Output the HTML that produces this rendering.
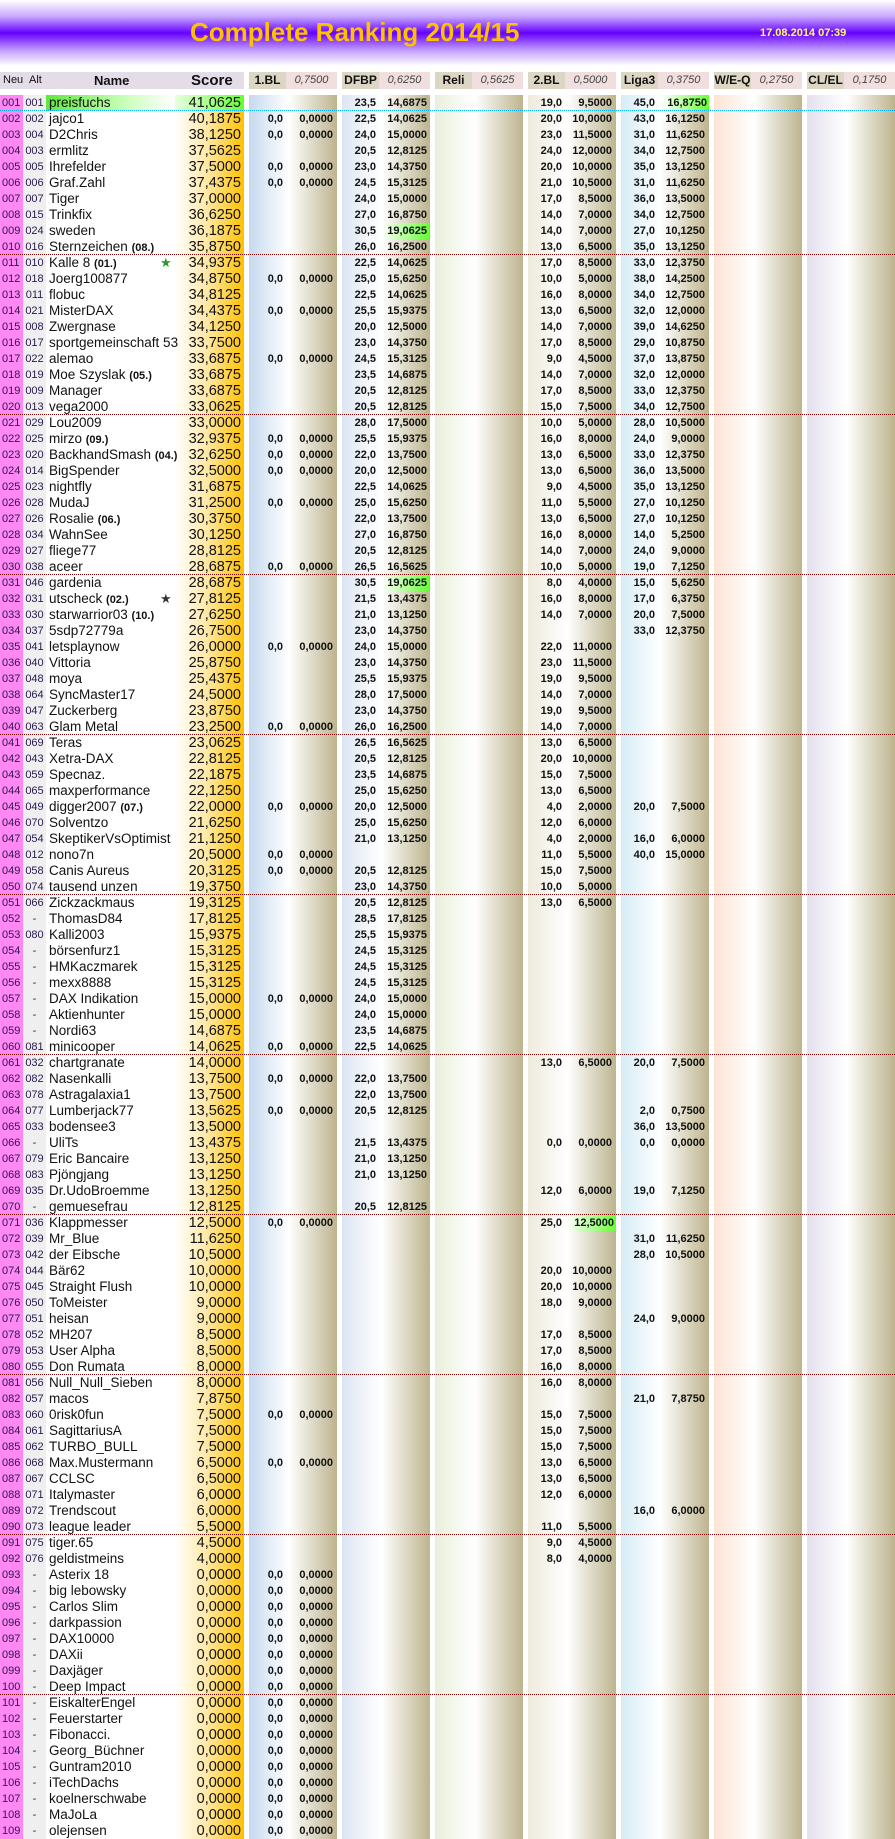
<!DOCTYPE html>
<html><head><meta charset="utf-8"><style>
*{margin:0;padding:0;box-sizing:border-box}
body{width:895px;height:1839px;background:#fff;position:relative;overflow:hidden;font-family:"Liberation Sans",Arial,sans-serif;color:#111}
#hd{position:absolute;left:0;top:0;width:895px;height:66px;background:linear-gradient(#fff 0%,#c8a8ff 25%,#6600ff 50%,#c8a8ff 78%,#fff 100%)}
#tt{position:absolute;left:190px;top:17px;font-size:26px;font-weight:bold;color:#ffc000;white-space:nowrap}
#dt{position:absolute;left:760px;top:27px;font-size:11px;font-weight:bold;color:#ffff66;white-space:nowrap}
.h{position:absolute;top:72px;height:17px;line-height:17px;font-size:11px;white-space:nowrap}
.bg{position:absolute;top:95px;height:1744px}
.bk{width:88px}
#rows{position:absolute;left:0;top:95px;width:895px}
.r{position:relative;height:16px;width:895px}
.r>i{position:absolute;top:0;height:16px;line-height:16px;font-style:normal;white-space:nowrap;text-align:right;font-size:11px;font-weight:bold;color:#111}
.r>i:nth-child(1){left:0;width:23px;text-align:left;padding-left:2px;font-weight:normal;color:#2a1850}
.r>i:nth-child(2){left:23px;width:23px;text-align:center;font-weight:normal;color:#2a1850}
.r>i:nth-child(3){left:49px;text-align:left;font-size:13.5px;font-weight:normal}
.r>i:nth-child(4){left:175px;width:66px;font-size:14.5px;font-weight:normal}
.r>i:nth-child(5){left:249px;width:34px}
.r>i:nth-child(6){left:285px;width:48px}
.r>i:nth-child(7){left:342px;width:34px}
.r>i:nth-child(8){left:378px;width:49px}
.r>i:nth-child(9){left:528px;width:34px}
.r>i:nth-child(10){left:564px;width:48px}
.r>i:nth-child(11){left:621px;width:34px}
.r>i:nth-child(12){left:657px;width:48px}
.r>i.g{background:linear-gradient(90deg,#fff,#66ff33);padding-right:2px}
.r>i:nth-child(8).g{left:382px;width:47px}
.r>i:nth-child(10).g{left:567px;width:49px}
.r>i:nth-child(12).g{left:662px;width:47px}
.r>i b{font-size:11px}
.s::after{content:"";position:absolute;left:0;right:0;bottom:0;border-bottom:1px dotted #7a0000}
.c::after{content:"";position:absolute;left:0;right:0;bottom:0;border-bottom:1px dotted #00b0f0}
.st{position:absolute;left:111px;top:0;font-size:13px;color:#2a9a2a}
.st2{position:absolute;left:111px;top:0;font-size:13px;color:#333}
</style></head><body>
<div id="hd"></div>
<div id="tt">Complete Ranking 2014/15</div>
<div id="dt">17.08.2014 07:39</div>

<div class="h" style="left:0;width:244px;background:#e4dde8"></div>
<div class="h" style="left:3px">Neu</div>
<div class="h" style="left:29px">Alt</div>
<div class="h" style="left:94px;font-size:13px;font-weight:bold">Name</div>
<div class="h" style="left:191px;font-size:15px;font-weight:bold">Score</div>

<div class="h" style="left:249px;width:37px;background:#dcd6c4;text-align:center;font-weight:bold;font-size:12px">1.BL</div><div class="h" style="left:286px;width:51px;background:#f1dede;text-align:center;font-style:italic;color:#444">0,7500</div>
<div class="h" style="left:342px;width:37px;background:#dcd6c4;text-align:center;font-weight:bold;font-size:12px">DFBP</div><div class="h" style="left:379px;width:51px;background:#f1dede;text-align:center;font-style:italic;color:#444">0,6250</div>
<div class="h" style="left:435px;width:37px;background:#dcd6c4;text-align:center;font-weight:bold;font-size:12px">Reli</div><div class="h" style="left:472px;width:51px;background:#f1dede;text-align:center;font-style:italic;color:#444">0,5625</div>
<div class="h" style="left:528px;width:37px;background:#dcd6c4;text-align:center;font-weight:bold;font-size:12px">2.BL</div><div class="h" style="left:565px;width:51px;background:#f1dede;text-align:center;font-style:italic;color:#444">0,5000</div>
<div class="h" style="left:621px;width:37px;background:#dcd6c4;text-align:center;font-weight:bold;font-size:12px">Liga3</div><div class="h" style="left:658px;width:51px;background:#f1dede;text-align:center;font-style:italic;color:#444">0,3750</div>
<div class="h" style="left:714px;width:37px;background:#dcd6c4;text-align:center;font-weight:bold;font-size:12px">W/E-Q</div><div class="h" style="left:751px;width:51px;background:#f1dede;text-align:center;font-style:italic;color:#444">0,2750</div>
<div class="h" style="left:807px;width:37px;background:#dcd6c4;text-align:center;font-weight:bold;font-size:12px">CL/EL</div><div class="h" style="left:844px;width:51px;background:#f1dede;text-align:center;font-style:italic;color:#444">0,1750</div>

<div class="bg" style="left:0;width:23px;background:#ff88f4"></div>
<div class="bg" style="left:23px;width:23px;background:#efefef"></div>
<div class="bg" style="left:46px;top:95px;height:16px;width:129px;background:linear-gradient(90deg,#5fe83a,#c8ffb8 60%,#fff)"></div>
<div class="bg" style="left:175px;width:69px;background:linear-gradient(90deg,#fff 0%,#ffe9a8 45%,#ffc000 100%)"></div>
<div class="bg" style="left:175px;height:16px;width:69px;background:linear-gradient(90deg,#e8ffe0,#66ff33)"></div>
<div class="bg bk" style="left:249px;background:linear-gradient(90deg,#c6d9f0,#fff 45%,#bdb48e)"></div>
<div class="bg bk" style="left:342px;background:linear-gradient(90deg,#dde5f2,#fff 45%,#bdb48e)"></div>
<div class="bg bk" style="left:435px;background:linear-gradient(90deg,#e8f0dc,#fff 45%,#bdb48e)"></div>
<div class="bg bk" style="left:528px;background:linear-gradient(90deg,#eeeadc,#fff 45%,#bdb48e)"></div>
<div class="bg bk" style="left:621px;background:linear-gradient(90deg,#d6ecf6,#fff 45%,#bdb48e)"></div>
<div class="bg bk" style="left:714px;background:linear-gradient(90deg,#fde3d4,#fff 45%,#bdb48e)"></div>
<div class="bg bk" style="left:807px;background:linear-gradient(90deg,#e4e0ee,#fff 45%,#bdb48e)"></div>

<div id="rows">
<div class="r c"><i>001</i><i>001</i><i>preisfuchs</i><i>41,0625</i><i></i><i></i><i>23,5</i><i>14,6875</i><i>19,0</i><i>9,5000</i><i>45,0</i><i class="g">16,8750</i></div>
<div class="r"><i>002</i><i>002</i><i>jajco1</i><i>40,1875</i><i>0,0</i><i>0,0000</i><i>22,5</i><i>14,0625</i><i>20,0</i><i>10,0000</i><i>43,0</i><i>16,1250</i></div>
<div class="r"><i>003</i><i>004</i><i>D2Chris</i><i>38,1250</i><i>0,0</i><i>0,0000</i><i>24,0</i><i>15,0000</i><i>23,0</i><i>11,5000</i><i>31,0</i><i>11,6250</i></div>
<div class="r"><i>004</i><i>003</i><i>ermlitz</i><i>37,5625</i><i></i><i></i><i>20,5</i><i>12,8125</i><i>24,0</i><i>12,0000</i><i>34,0</i><i>12,7500</i></div>
<div class="r"><i>005</i><i>005</i><i>Ihrefelder</i><i>37,5000</i><i>0,0</i><i>0,0000</i><i>23,0</i><i>14,3750</i><i>20,0</i><i>10,0000</i><i>35,0</i><i>13,1250</i></div>
<div class="r"><i>006</i><i>006</i><i>Graf.Zahl</i><i>37,4375</i><i>0,0</i><i>0,0000</i><i>24,5</i><i>15,3125</i><i>21,0</i><i>10,5000</i><i>31,0</i><i>11,6250</i></div>
<div class="r"><i>007</i><i>007</i><i>Tiger</i><i>37,0000</i><i></i><i></i><i>24,0</i><i>15,0000</i><i>17,0</i><i>8,5000</i><i>36,0</i><i>13,5000</i></div>
<div class="r"><i>008</i><i>015</i><i>Trinkfix</i><i>36,6250</i><i></i><i></i><i>27,0</i><i>16,8750</i><i>14,0</i><i>7,0000</i><i>34,0</i><i>12,7500</i></div>
<div class="r"><i>009</i><i>024</i><i>sweden</i><i>36,1875</i><i></i><i></i><i>30,5</i><i class="g">19,0625</i><i>14,0</i><i>7,0000</i><i>27,0</i><i>10,1250</i></div>
<div class="r s"><i>010</i><i>016</i><i>Sternzeichen <b>(08.)</b></i><i>35,8750</i><i></i><i></i><i>26,0</i><i>16,2500</i><i>13,0</i><i>6,5000</i><i>35,0</i><i>13,1250</i></div>
<div class="r"><i>011</i><i>010</i><i>Kalle 8 <b>(01.)</b><span class="st">★</span></i><i>34,9375</i><i></i><i></i><i>22,5</i><i>14,0625</i><i>17,0</i><i>8,5000</i><i>33,0</i><i>12,3750</i></div>
<div class="r"><i>012</i><i>018</i><i>Joerg100877</i><i>34,8750</i><i>0,0</i><i>0,0000</i><i>25,0</i><i>15,6250</i><i>10,0</i><i>5,0000</i><i>38,0</i><i>14,2500</i></div>
<div class="r"><i>013</i><i>011</i><i>flobuc</i><i>34,8125</i><i></i><i></i><i>22,5</i><i>14,0625</i><i>16,0</i><i>8,0000</i><i>34,0</i><i>12,7500</i></div>
<div class="r"><i>014</i><i>021</i><i>MisterDAX</i><i>34,4375</i><i>0,0</i><i>0,0000</i><i>25,5</i><i>15,9375</i><i>13,0</i><i>6,5000</i><i>32,0</i><i>12,0000</i></div>
<div class="r"><i>015</i><i>008</i><i>Zwergnase</i><i>34,1250</i><i></i><i></i><i>20,0</i><i>12,5000</i><i>14,0</i><i>7,0000</i><i>39,0</i><i>14,6250</i></div>
<div class="r"><i>016</i><i>017</i><i>sportgemeinschaft 53</i><i>33,7500</i><i></i><i></i><i>23,0</i><i>14,3750</i><i>17,0</i><i>8,5000</i><i>29,0</i><i>10,8750</i></div>
<div class="r"><i>017</i><i>022</i><i>alemao</i><i>33,6875</i><i>0,0</i><i>0,0000</i><i>24,5</i><i>15,3125</i><i>9,0</i><i>4,5000</i><i>37,0</i><i>13,8750</i></div>
<div class="r"><i>018</i><i>019</i><i>Moe Szyslak <b>(05.)</b></i><i>33,6875</i><i></i><i></i><i>23,5</i><i>14,6875</i><i>14,0</i><i>7,0000</i><i>32,0</i><i>12,0000</i></div>
<div class="r"><i>019</i><i>009</i><i>Manager</i><i>33,6875</i><i></i><i></i><i>20,5</i><i>12,8125</i><i>17,0</i><i>8,5000</i><i>33,0</i><i>12,3750</i></div>
<div class="r s"><i>020</i><i>013</i><i>vega2000</i><i>33,0625</i><i></i><i></i><i>20,5</i><i>12,8125</i><i>15,0</i><i>7,5000</i><i>34,0</i><i>12,7500</i></div>
<div class="r"><i>021</i><i>029</i><i>Lou2009</i><i>33,0000</i><i></i><i></i><i>28,0</i><i>17,5000</i><i>10,0</i><i>5,0000</i><i>28,0</i><i>10,5000</i></div>
<div class="r"><i>022</i><i>025</i><i>mirzo <b>(09.)</b></i><i>32,9375</i><i>0,0</i><i>0,0000</i><i>25,5</i><i>15,9375</i><i>16,0</i><i>8,0000</i><i>24,0</i><i>9,0000</i></div>
<div class="r"><i>023</i><i>020</i><i>BackhandSmash <b>(04.)</b></i><i>32,6250</i><i>0,0</i><i>0,0000</i><i>22,0</i><i>13,7500</i><i>13,0</i><i>6,5000</i><i>33,0</i><i>12,3750</i></div>
<div class="r"><i>024</i><i>014</i><i>BigSpender</i><i>32,5000</i><i>0,0</i><i>0,0000</i><i>20,0</i><i>12,5000</i><i>13,0</i><i>6,5000</i><i>36,0</i><i>13,5000</i></div>
<div class="r"><i>025</i><i>023</i><i>nightfly</i><i>31,6875</i><i></i><i></i><i>22,5</i><i>14,0625</i><i>9,0</i><i>4,5000</i><i>35,0</i><i>13,1250</i></div>
<div class="r"><i>026</i><i>028</i><i>MudaJ</i><i>31,2500</i><i>0,0</i><i>0,0000</i><i>25,0</i><i>15,6250</i><i>11,0</i><i>5,5000</i><i>27,0</i><i>10,1250</i></div>
<div class="r"><i>027</i><i>026</i><i>Rosalie <b>(06.)</b></i><i>30,3750</i><i></i><i></i><i>22,0</i><i>13,7500</i><i>13,0</i><i>6,5000</i><i>27,0</i><i>10,1250</i></div>
<div class="r"><i>028</i><i>034</i><i>WahnSee</i><i>30,1250</i><i></i><i></i><i>27,0</i><i>16,8750</i><i>16,0</i><i>8,0000</i><i>14,0</i><i>5,2500</i></div>
<div class="r"><i>029</i><i>027</i><i>fliege77</i><i>28,8125</i><i></i><i></i><i>20,5</i><i>12,8125</i><i>14,0</i><i>7,0000</i><i>24,0</i><i>9,0000</i></div>
<div class="r s"><i>030</i><i>038</i><i>aceer</i><i>28,6875</i><i>0,0</i><i>0,0000</i><i>26,5</i><i>16,5625</i><i>10,0</i><i>5,0000</i><i>19,0</i><i>7,1250</i></div>
<div class="r"><i>031</i><i>046</i><i>gardenia</i><i>28,6875</i><i></i><i></i><i>30,5</i><i class="g">19,0625</i><i>8,0</i><i>4,0000</i><i>15,0</i><i>5,6250</i></div>
<div class="r"><i>032</i><i>031</i><i>utscheck <b>(02.)</b><span class="st2">★</span></i><i>27,8125</i><i></i><i></i><i>21,5</i><i>13,4375</i><i>16,0</i><i>8,0000</i><i>17,0</i><i>6,3750</i></div>
<div class="r"><i>033</i><i>030</i><i>starwarrior03 <b>(10.)</b></i><i>27,6250</i><i></i><i></i><i>21,0</i><i>13,1250</i><i>14,0</i><i>7,0000</i><i>20,0</i><i>7,5000</i></div>
<div class="r"><i>034</i><i>037</i><i>5sdp72779a</i><i>26,7500</i><i></i><i></i><i>23,0</i><i>14,3750</i><i></i><i></i><i>33,0</i><i>12,3750</i></div>
<div class="r"><i>035</i><i>041</i><i>letsplaynow</i><i>26,0000</i><i>0,0</i><i>0,0000</i><i>24,0</i><i>15,0000</i><i>22,0</i><i>11,0000</i><i></i><i></i></div>
<div class="r"><i>036</i><i>040</i><i>Vittoria</i><i>25,8750</i><i></i><i></i><i>23,0</i><i>14,3750</i><i>23,0</i><i>11,5000</i><i></i><i></i></div>
<div class="r"><i>037</i><i>048</i><i>moya</i><i>25,4375</i><i></i><i></i><i>25,5</i><i>15,9375</i><i>19,0</i><i>9,5000</i><i></i><i></i></div>
<div class="r"><i>038</i><i>064</i><i>SyncMaster17</i><i>24,5000</i><i></i><i></i><i>28,0</i><i>17,5000</i><i>14,0</i><i>7,0000</i><i></i><i></i></div>
<div class="r"><i>039</i><i>047</i><i>Zuckerberg</i><i>23,8750</i><i></i><i></i><i>23,0</i><i>14,3750</i><i>19,0</i><i>9,5000</i><i></i><i></i></div>
<div class="r s"><i>040</i><i>063</i><i>Glam Metal</i><i>23,2500</i><i>0,0</i><i>0,0000</i><i>26,0</i><i>16,2500</i><i>14,0</i><i>7,0000</i><i></i><i></i></div>
<div class="r"><i>041</i><i>069</i><i>Teras</i><i>23,0625</i><i></i><i></i><i>26,5</i><i>16,5625</i><i>13,0</i><i>6,5000</i><i></i><i></i></div>
<div class="r"><i>042</i><i>043</i><i>Xetra-DAX</i><i>22,8125</i><i></i><i></i><i>20,5</i><i>12,8125</i><i>20,0</i><i>10,0000</i><i></i><i></i></div>
<div class="r"><i>043</i><i>059</i><i>Specnaz.</i><i>22,1875</i><i></i><i></i><i>23,5</i><i>14,6875</i><i>15,0</i><i>7,5000</i><i></i><i></i></div>
<div class="r"><i>044</i><i>065</i><i>maxperformance</i><i>22,1250</i><i></i><i></i><i>25,0</i><i>15,6250</i><i>13,0</i><i>6,5000</i><i></i><i></i></div>
<div class="r"><i>045</i><i>049</i><i>digger2007 <b>(07.)</b></i><i>22,0000</i><i>0,0</i><i>0,0000</i><i>20,0</i><i>12,5000</i><i>4,0</i><i>2,0000</i><i>20,0</i><i>7,5000</i></div>
<div class="r"><i>046</i><i>070</i><i>Solventzo</i><i>21,6250</i><i></i><i></i><i>25,0</i><i>15,6250</i><i>12,0</i><i>6,0000</i><i></i><i></i></div>
<div class="r"><i>047</i><i>054</i><i>SkeptikerVsOptimist</i><i>21,1250</i><i></i><i></i><i>21,0</i><i>13,1250</i><i>4,0</i><i>2,0000</i><i>16,0</i><i>6,0000</i></div>
<div class="r"><i>048</i><i>012</i><i>nono7n</i><i>20,5000</i><i>0,0</i><i>0,0000</i><i></i><i></i><i>11,0</i><i>5,5000</i><i>40,0</i><i>15,0000</i></div>
<div class="r"><i>049</i><i>058</i><i>Canis Aureus</i><i>20,3125</i><i>0,0</i><i>0,0000</i><i>20,5</i><i>12,8125</i><i>15,0</i><i>7,5000</i><i></i><i></i></div>
<div class="r s"><i>050</i><i>074</i><i>tausend unzen</i><i>19,3750</i><i></i><i></i><i>23,0</i><i>14,3750</i><i>10,0</i><i>5,0000</i><i></i><i></i></div>
<div class="r"><i>051</i><i>066</i><i>Zickzackmaus</i><i>19,3125</i><i></i><i></i><i>20,5</i><i>12,8125</i><i>13,0</i><i>6,5000</i><i></i><i></i></div>
<div class="r"><i>052</i><i>-</i><i>ThomasD84</i><i>17,8125</i><i></i><i></i><i>28,5</i><i>17,8125</i><i></i><i></i><i></i><i></i></div>
<div class="r"><i>053</i><i>080</i><i>Kalli2003</i><i>15,9375</i><i></i><i></i><i>25,5</i><i>15,9375</i><i></i><i></i><i></i><i></i></div>
<div class="r"><i>054</i><i>-</i><i>börsenfurz1</i><i>15,3125</i><i></i><i></i><i>24,5</i><i>15,3125</i><i></i><i></i><i></i><i></i></div>
<div class="r"><i>055</i><i>-</i><i>HMKaczmarek</i><i>15,3125</i><i></i><i></i><i>24,5</i><i>15,3125</i><i></i><i></i><i></i><i></i></div>
<div class="r"><i>056</i><i>-</i><i>mexx8888</i><i>15,3125</i><i></i><i></i><i>24,5</i><i>15,3125</i><i></i><i></i><i></i><i></i></div>
<div class="r"><i>057</i><i>-</i><i>DAX Indikation</i><i>15,0000</i><i>0,0</i><i>0,0000</i><i>24,0</i><i>15,0000</i><i></i><i></i><i></i><i></i></div>
<div class="r"><i>058</i><i>-</i><i>Aktienhunter</i><i>15,0000</i><i></i><i></i><i>24,0</i><i>15,0000</i><i></i><i></i><i></i><i></i></div>
<div class="r"><i>059</i><i>-</i><i>Nordi63</i><i>14,6875</i><i></i><i></i><i>23,5</i><i>14,6875</i><i></i><i></i><i></i><i></i></div>
<div class="r s"><i>060</i><i>081</i><i>minicooper</i><i>14,0625</i><i>0,0</i><i>0,0000</i><i>22,5</i><i>14,0625</i><i></i><i></i><i></i><i></i></div>
<div class="r"><i>061</i><i>032</i><i>chartgranate</i><i>14,0000</i><i></i><i></i><i></i><i></i><i>13,0</i><i>6,5000</i><i>20,0</i><i>7,5000</i></div>
<div class="r"><i>062</i><i>082</i><i>Nasenkalli</i><i>13,7500</i><i>0,0</i><i>0,0000</i><i>22,0</i><i>13,7500</i><i></i><i></i><i></i><i></i></div>
<div class="r"><i>063</i><i>078</i><i>Astragalaxia1</i><i>13,7500</i><i></i><i></i><i>22,0</i><i>13,7500</i><i></i><i></i><i></i><i></i></div>
<div class="r"><i>064</i><i>077</i><i>Lumberjack77</i><i>13,5625</i><i>0,0</i><i>0,0000</i><i>20,5</i><i>12,8125</i><i></i><i></i><i>2,0</i><i>0,7500</i></div>
<div class="r"><i>065</i><i>033</i><i>bodensee3</i><i>13,5000</i><i></i><i></i><i></i><i></i><i></i><i></i><i>36,0</i><i>13,5000</i></div>
<div class="r"><i>066</i><i>-</i><i>UliTs</i><i>13,4375</i><i></i><i></i><i>21,5</i><i>13,4375</i><i>0,0</i><i>0,0000</i><i>0,0</i><i>0,0000</i></div>
<div class="r"><i>067</i><i>079</i><i>Eric Bancaire</i><i>13,1250</i><i></i><i></i><i>21,0</i><i>13,1250</i><i></i><i></i><i></i><i></i></div>
<div class="r"><i>068</i><i>083</i><i>Pjöngjang</i><i>13,1250</i><i></i><i></i><i>21,0</i><i>13,1250</i><i></i><i></i><i></i><i></i></div>
<div class="r"><i>069</i><i>035</i><i>Dr.UdoBroemme</i><i>13,1250</i><i></i><i></i><i></i><i></i><i>12,0</i><i>6,0000</i><i>19,0</i><i>7,1250</i></div>
<div class="r s"><i>070</i><i>-</i><i>gemuesefrau</i><i>12,8125</i><i></i><i></i><i>20,5</i><i>12,8125</i><i></i><i></i><i></i><i></i></div>
<div class="r"><i>071</i><i>036</i><i>Klappmesser</i><i>12,5000</i><i>0,0</i><i>0,0000</i><i></i><i></i><i>25,0</i><i class="g">12,5000</i><i></i><i></i></div>
<div class="r"><i>072</i><i>039</i><i>Mr_Blue</i><i>11,6250</i><i></i><i></i><i></i><i></i><i></i><i></i><i>31,0</i><i>11,6250</i></div>
<div class="r"><i>073</i><i>042</i><i>der Eibsche</i><i>10,5000</i><i></i><i></i><i></i><i></i><i></i><i></i><i>28,0</i><i>10,5000</i></div>
<div class="r"><i>074</i><i>044</i><i>Bär62</i><i>10,0000</i><i></i><i></i><i></i><i></i><i>20,0</i><i>10,0000</i><i></i><i></i></div>
<div class="r"><i>075</i><i>045</i><i>Straight Flush</i><i>10,0000</i><i></i><i></i><i></i><i></i><i>20,0</i><i>10,0000</i><i></i><i></i></div>
<div class="r"><i>076</i><i>050</i><i>ToMeister</i><i>9,0000</i><i></i><i></i><i></i><i></i><i>18,0</i><i>9,0000</i><i></i><i></i></div>
<div class="r"><i>077</i><i>051</i><i>heisan</i><i>9,0000</i><i></i><i></i><i></i><i></i><i></i><i></i><i>24,0</i><i>9,0000</i></div>
<div class="r"><i>078</i><i>052</i><i>MH207</i><i>8,5000</i><i></i><i></i><i></i><i></i><i>17,0</i><i>8,5000</i><i></i><i></i></div>
<div class="r"><i>079</i><i>053</i><i>User Alpha</i><i>8,5000</i><i></i><i></i><i></i><i></i><i>17,0</i><i>8,5000</i><i></i><i></i></div>
<div class="r s"><i>080</i><i>055</i><i>Don Rumata</i><i>8,0000</i><i></i><i></i><i></i><i></i><i>16,0</i><i>8,0000</i><i></i><i></i></div>
<div class="r"><i>081</i><i>056</i><i>Null_Null_Sieben</i><i>8,0000</i><i></i><i></i><i></i><i></i><i>16,0</i><i>8,0000</i><i></i><i></i></div>
<div class="r"><i>082</i><i>057</i><i>macos</i><i>7,8750</i><i></i><i></i><i></i><i></i><i></i><i></i><i>21,0</i><i>7,8750</i></div>
<div class="r"><i>083</i><i>060</i><i>0risk0fun</i><i>7,5000</i><i>0,0</i><i>0,0000</i><i></i><i></i><i>15,0</i><i>7,5000</i><i></i><i></i></div>
<div class="r"><i>084</i><i>061</i><i>SagittariusA</i><i>7,5000</i><i></i><i></i><i></i><i></i><i>15,0</i><i>7,5000</i><i></i><i></i></div>
<div class="r"><i>085</i><i>062</i><i>TURBO_BULL</i><i>7,5000</i><i></i><i></i><i></i><i></i><i>15,0</i><i>7,5000</i><i></i><i></i></div>
<div class="r"><i>086</i><i>068</i><i>Max.Mustermann</i><i>6,5000</i><i>0,0</i><i>0,0000</i><i></i><i></i><i>13,0</i><i>6,5000</i><i></i><i></i></div>
<div class="r"><i>087</i><i>067</i><i>CCLSC</i><i>6,5000</i><i></i><i></i><i></i><i></i><i>13,0</i><i>6,5000</i><i></i><i></i></div>
<div class="r"><i>088</i><i>071</i><i>Italymaster</i><i>6,0000</i><i></i><i></i><i></i><i></i><i>12,0</i><i>6,0000</i><i></i><i></i></div>
<div class="r"><i>089</i><i>072</i><i>Trendscout</i><i>6,0000</i><i></i><i></i><i></i><i></i><i></i><i></i><i>16,0</i><i>6,0000</i></div>
<div class="r s"><i>090</i><i>073</i><i>league leader</i><i>5,5000</i><i></i><i></i><i></i><i></i><i>11,0</i><i>5,5000</i><i></i><i></i></div>
<div class="r"><i>091</i><i>075</i><i>tiger.65</i><i>4,5000</i><i></i><i></i><i></i><i></i><i>9,0</i><i>4,5000</i><i></i><i></i></div>
<div class="r"><i>092</i><i>076</i><i>geldistmeins</i><i>4,0000</i><i></i><i></i><i></i><i></i><i>8,0</i><i>4,0000</i><i></i><i></i></div>
<div class="r"><i>093</i><i>-</i><i>Asterix 18</i><i>0,0000</i><i>0,0</i><i>0,0000</i></div>
<div class="r"><i>094</i><i>-</i><i>big lebowsky</i><i>0,0000</i><i>0,0</i><i>0,0000</i></div>
<div class="r"><i>095</i><i>-</i><i>Carlos Slim</i><i>0,0000</i><i>0,0</i><i>0,0000</i></div>
<div class="r"><i>096</i><i>-</i><i>darkpassion</i><i>0,0000</i><i>0,0</i><i>0,0000</i></div>
<div class="r"><i>097</i><i>-</i><i>DAX10000</i><i>0,0000</i><i>0,0</i><i>0,0000</i></div>
<div class="r"><i>098</i><i>-</i><i>DAXii</i><i>0,0000</i><i>0,0</i><i>0,0000</i></div>
<div class="r"><i>099</i><i>-</i><i>Daxjäger</i><i>0,0000</i><i>0,0</i><i>0,0000</i></div>
<div class="r s"><i>100</i><i>-</i><i>Deep Impact</i><i>0,0000</i><i>0,0</i><i>0,0000</i></div>
<div class="r"><i>101</i><i>-</i><i>EiskalterEngel</i><i>0,0000</i><i>0,0</i><i>0,0000</i></div>
<div class="r"><i>102</i><i>-</i><i>Feuerstarter</i><i>0,0000</i><i>0,0</i><i>0,0000</i></div>
<div class="r"><i>103</i><i>-</i><i>Fibonacci.</i><i>0,0000</i><i>0,0</i><i>0,0000</i></div>
<div class="r"><i>104</i><i>-</i><i>Georg_Büchner</i><i>0,0000</i><i>0,0</i><i>0,0000</i></div>
<div class="r"><i>105</i><i>-</i><i>Guntram2010</i><i>0,0000</i><i>0,0</i><i>0,0000</i></div>
<div class="r"><i>106</i><i>-</i><i>iTechDachs</i><i>0,0000</i><i>0,0</i><i>0,0000</i></div>
<div class="r"><i>107</i><i>-</i><i>koelnerschwabe</i><i>0,0000</i><i>0,0</i><i>0,0000</i></div>
<div class="r"><i>108</i><i>-</i><i>MaJoLa</i><i>0,0000</i><i>0,0</i><i>0,0000</i></div>
<div class="r"><i>109</i><i>-</i><i>olejensen</i><i>0,0000</i><i>0,0</i><i>0,0000</i></div>
</div>
</body></html>
